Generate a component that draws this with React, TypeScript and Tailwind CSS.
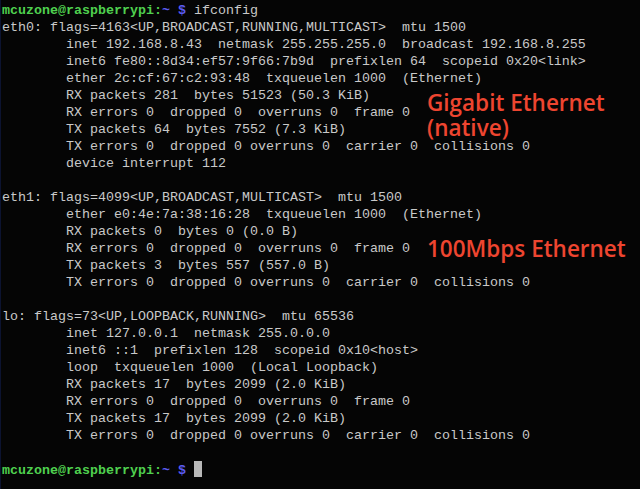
const lines: string[] = [
  "eth0: flags=4163<UP,BROADCAST,RUNNING,MULTICAST>  mtu 1500",
  "        inet 192.168.8.43  netmask 255.255.255.0  broadcast 192.168.8.255",
  "        inet6 fe80::8d34:ef57:9f66:7b9d  prefixlen 64  scopeid 0x20<link>",
  "        ether 2c:cf:67:c2:93:48  txqueuelen 1000  (Ethernet)",
  "        RX packets 281  bytes 51523 (50.3 KiB)",
  "        RX errors 0  dropped 0  overruns 0  frame 0",
  "        TX packets 64  bytes 7552 (7.3 KiB)",
  "        TX errors 0  dropped 0 overruns 0  carrier 0  collisions 0",
  "        device interrupt 112",
  "",
  "eth1: flags=4099<UP,BROADCAST,MULTICAST>  mtu 1500",
  "        ether e0:4e:7a:38:16:28  txqueuelen 1000  (Ethernet)",
  "        RX packets 0  bytes 0 (0.0 B)",
  "        RX errors 0  dropped 0  overruns 0  frame 0",
  "        TX packets 3  bytes 557 (557.0 B)",
  "        TX errors 0  dropped 0 overruns 0  carrier 0  collisions 0",
  "",
  "lo: flags=73<UP,LOOPBACK,RUNNING>  mtu 65536",
  "        inet 127.0.0.1  netmask 255.0.0.0",
  "        inet6 ::1  prefixlen 128  scopeid 0x10<host>",
  "        loop  txqueuelen 1000  (Local Loopback)",
  "        RX packets 17  bytes 2099 (2.0 KiB)",
  "        RX errors 0  dropped 0  overruns 0  frame 0",
  "        TX packets 17  bytes 2099 (2.0 KiB)",
  "        TX errors 0  dropped 0 overruns 0  carrier 0  collisions 0",
  "",
];

const Prompt = ({ children }: { children?: React.ReactNode }) => (
  <div className="h-[17px] whitespace-pre">
    <span className="font-bold text-[#4fd04f]">mcuzone@raspberrypi:</span>
    <span className="font-bold text-[#5c5cf0]">~ $</span>
    {children}
  </div>
);

export default function App() {
  return (
    <div className="relative w-[640px] h-[489px] overflow-hidden bg-[#050505] border-l border-[#0c1330]">
      <div className="pl-[1px] pt-[2px] font-['Liberation_Mono',monospace] text-[13.33px] leading-[17px] text-[#c9c9c9]">
        <Prompt>
          <span> ifconfig</span>
        </Prompt>
        {lines.map((l, i) => (
          <div key={i} className="h-[17px] whitespace-pre">{l}</div>
        ))}
        <Prompt>
          <span> </span>
          <span className="inline-block w-[8px] h-[16px] align-[-3px] bg-[#b8b8b8]"></span>
        </Prompt>
      </div>

      {/* annotations drawn over the terminal */}
      <div className="absolute left-[426px] top-[90px] font-['Open_Sans',sans-serif] font-semibold text-[22.5px] leading-[25px] text-[#ee4530]">
        <div>Gigabit Ethernet</div>
        <div>(native)</div>
      </div>
      <div className="absolute left-[426px] top-[236px] font-['Open_Sans',sans-serif] font-semibold text-[22.5px] leading-[25px] text-[#ee4530]">
        100Mbps Ethernet
      </div>
    </div>
  );
}
